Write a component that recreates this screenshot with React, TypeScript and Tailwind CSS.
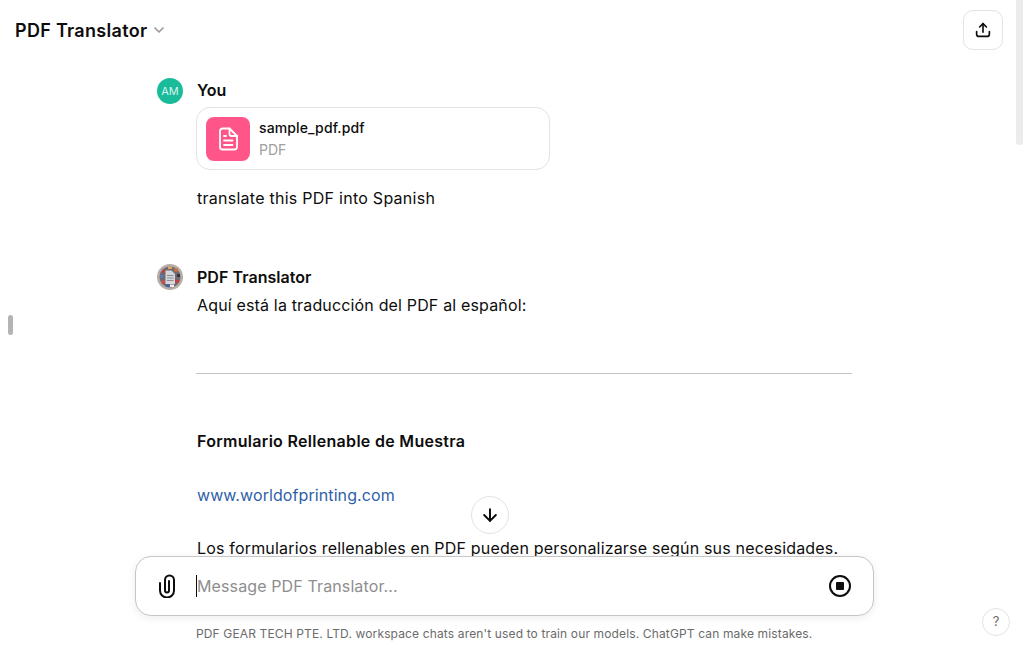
import React from "react";
import { ArrowDown, ChevronDown } from "lucide-react";

function ShareIcon() {
  return (
    <svg width="18" height="18" viewBox="0 0 24 24" fill="none" stroke="#0d0d0d" strokeWidth="2.2" strokeLinecap="round" strokeLinejoin="round">
      <path d="M12 15V3.5" />
      <path d="M7.5 8 12 3.5 16.5 8" />
      <path d="M3.5 14v3.5a3 3 0 0 0 3 3h11a3 3 0 0 0 3-3V14" />
    </svg>
  );
}

function FileIcon() {
  return (
    <svg width="24" height="24" viewBox="0 0 24 24" fill="none" stroke="#fff" strokeWidth="1.8" strokeLinecap="round" strokeLinejoin="round">
      <path d="M6.500 1.500h7L21 9v11a2.500 2.500 0 0 1-2.500 2.500h-12A2.500 2.500 0 0 1 4 20V4a2.500 2.500 0 0 1 2.500-2.500Z" />
      <path d="M13.500 1.500V7a2 2 0 0 0 2 2H21" />
      <path d="M8 9h2M8 13.500h8.500M8 18h8.500" />
    </svg>
  );
}

function StopIcon() {
  return (
    <svg width="24" height="24" viewBox="0 0 24 24" fill="none">
      <circle cx="12" cy="12" r="10" stroke="#0d0d0d" strokeWidth="2" />
      <rect x="8" y="8" width="8" height="8" rx="1" fill="#0d0d0d" />
    </svg>
  );
}

function ClipIcon() {
  return (
    <svg width="18" height="24" viewBox="0 0 18 24" fill="none" stroke="#0d0d0d" strokeWidth="2" strokeLinecap="round" strokeLinejoin="round" className="shrink-0">
      <path d="M2 9v7.500a7 7 0 0 0 14 0V6a4.500 4.500 0 0 0-9 0v10.500a2 2 0 0 0 4 0V7" />
    </svg>
  );
}

function GptAvatar() {
  return (
    <svg width="26" height="26" viewBox="0 0 26 26" className="shrink-0">
      <circle cx="13" cy="13" r="13" fill="#b7aca6" />
      <circle cx="13" cy="13" r="10.500" fill="#6e6a72" />
      <rect x="5" y="6" width="4" height="3" fill="#b5434b" />
      <rect x="11" y="2.500" width="4" height="2.500" fill="#e0a65e" />
      <rect x="17" y="4.500" width="4" height="3" fill="#c9703c" />
      <rect x="3" y="11" width="3" height="3" fill="#5a78b8" />
      <rect x="20" y="10" width="3" height="3" fill="#34343c" />
      <rect x="4.500" y="16.500" width="4" height="3" fill="#d05050" />
      <rect x="18" y="16" width="4" height="3" fill="#c23f3f" />
      <rect x="9" y="20.500" width="3.500" height="2.500" fill="#3f5fa8" />
      <rect x="13" y="20.500" width="4" height="2.500" fill="#eeeef2" />
      <path d="M8.500 6.500h6l3.500 3.500v10h-9.500z" fill="#d4d7da" />
      <path d="M10 11.500h6.500M10 14h6.500M10 16.500h6.500" stroke="#8a8d92" strokeWidth="1" />
    </svg>
  );
}

export default function App() {
  return (
    <div className="relative flex h-[646px] w-[1023px] flex-col overflow-hidden bg-white font-['Inter','Liberation_Sans',sans-serif] text-[#0d0d0d]">
      <header className="flex h-[60px] shrink-0 items-start justify-between pl-[15px] pr-5 pt-[10px]">
        <div className="flex h-10 items-center gap-[4px]">
          <span className="text-[18px] font-semibold tracking-[0.3px] text-[#0d0d0d]">PDF Translator</span>
          <ChevronDown size={16} strokeWidth={2.6} className="text-[#9b9b9b]" />
        </div>
        <button className="flex h-10 w-10 items-center justify-center rounded-[10px] border border-[#e3e3e3] bg-white">
          <ShareIcon />
        </button>
      </header>

      <main className="min-h-0 flex-1 overflow-hidden pl-[157px]">
        <div className="flex gap-[14px] pt-[18px]">
          <div className="flex h-[26px] w-[26px] shrink-0 items-center justify-center rounded-full bg-[#19bb9b] text-[11px] text-[#d8f3ed]">AM</div>
          <div className="min-w-0">
            <div className="h-[26px] text-[16px] font-semibold leading-[24px]">You</div>
            <div className="-ml-px mt-[3px] flex h-[63px] w-[354px] items-center gap-[9px] rounded-[14px] border border-[#e3e3e3] pl-[9px]">
              <div className="flex h-11 w-11 items-center justify-center rounded-[8px] bg-[#ff5588]"><FileIcon /></div>
              <div>
                <div className="text-[14px] font-medium leading-[20px] tracking-[0.12px]">sample_pdf.pdf</div>
                <div className="mt-[2px] text-[14px] leading-[20px] text-[#a0a0a0]">PDF</div>
              </div>
            </div>
            <p className="mt-4 text-[16px] leading-[24px] tracking-[0.26px]">translate this PDF into Spanish</p>
          </div>
        </div>

        <div className="mt-[54px] flex gap-[14px]">
          <GptAvatar />
          <div className="w-[655px] pt-px">
            <div className="text-[16px] font-semibold leading-[24px] tracking-[0.04px]">PDF Translator</div>
            <p className="mt-[2px] text-[16px] leading-[28px] tracking-[0.16px]">Aquí está la traducción del PDF al español:</p>
            <hr className="-ml-px mt-[54px] border-t border-[#c4c4c4]" />
            <p className="mt-[53px] text-[16px] font-semibold leading-[28px] tracking-[0.3px]">Formulario Rellenable de Muestra</p>
            <p className="mt-[26px] text-[16px] leading-[28px] tracking-[0.09px] text-[#2f5fa8]">www.worldofprinting.com</p>
            <p className="mt-[25px] whitespace-nowrap text-[16px] leading-[28px] tracking-[0.18px]">Los formularios rellenables en PDF pueden personalizarse según sus necesidades.</p>
          </div>
        </div>
      </main>

      <footer className="relative flex h-[90px] shrink-0 flex-col pl-[135px]">
        <div className="flex h-[60px] w-[739px] items-center rounded-2xl border border-[#c6c6c6] bg-white pl-[22px] pr-[21px] shadow-[0_2px_8px_rgba(0,0,0,0.08)]">
          <ClipIcon />
          <div className="ml-[20px] flex flex-1 items-center">
            <span className="h-[22px] w-px bg-[#0d0d0d]" />
            <span className="text-[16px] leading-[24px] tracking-[0.12px] text-[#8e8e8e]">Message PDF Translator...</span>
          </div>
          <StopIcon />
        </div>
        <p className="ml-[61px] mt-[10px] text-[12px] leading-[16px] tracking-[0.14px] text-[#6b6b6b]">PDF GEAR TECH PTE. LTD. workspace chats aren't used to train our models. ChatGPT can make mistakes.</p>
      </footer>

      <button className="absolute left-[471px] top-[496px] flex h-[38px] w-[38px] items-center justify-center rounded-full border border-[#e3e3e3] bg-white">
        <ArrowDown size={20} strokeWidth={2.4} />
      </button>
      <button className="absolute left-[982px] top-[608px] flex h-[28px] w-[28px] items-center justify-center rounded-full border border-[#e3e3e3] bg-white text-[13px] text-[#6b6b6b]">?</button>
      <div className="absolute right-0 top-0 h-[145px] w-[7px] rounded-b-[3px] bg-[#ececec]" />
      <div className="absolute left-[8px] top-[315px] h-[20px] w-[5px] rounded-full bg-[#b4b4b4]" />
    </div>
  );
}
